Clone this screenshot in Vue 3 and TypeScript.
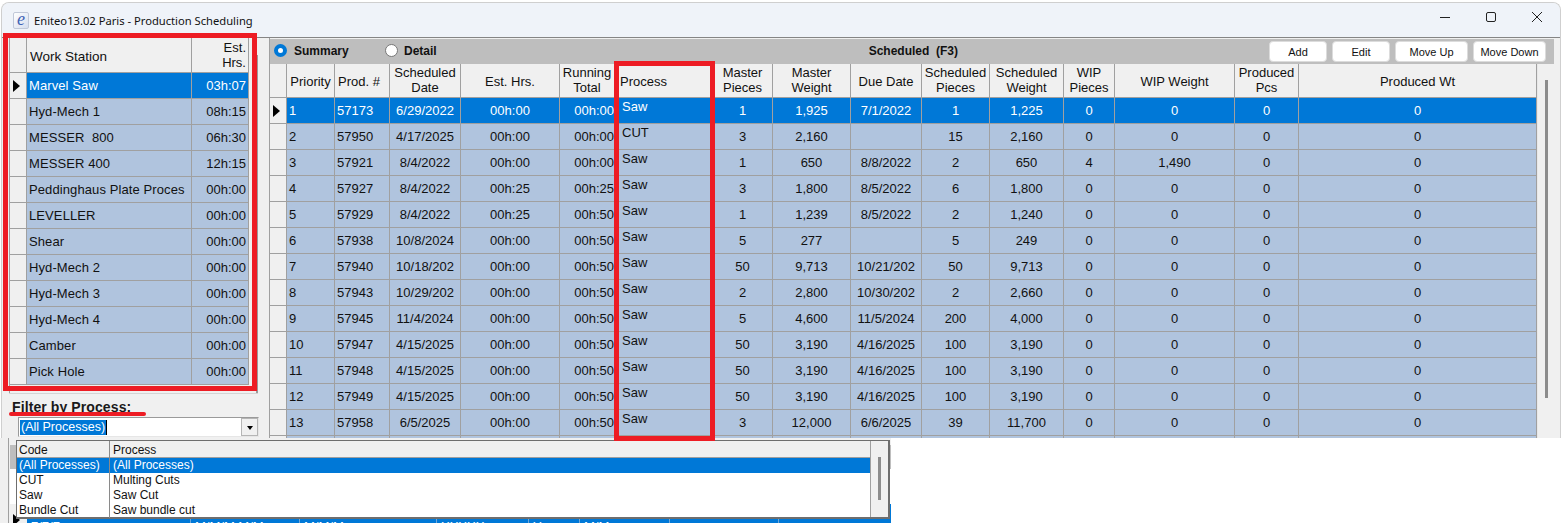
<script setup lang="ts">
interface Station {
  name: string
  hrs: string
}

interface Job {
  priority: number
  prod: string
  date: string
  est: string
  total: string
  process: string
  masterPcs: string
  masterWt: string
  due: string
  schedPcs: string
  schedWt: string
  wipPcs: string
  wipWt: string
}

const stations: Station[] = [
  { name: 'Marvel Saw', hrs: '03h:07' },
  { name: 'Hyd-Mech 1', hrs: '08h:15' },
  { name: 'MESSER  800', hrs: '06h:30' },
  { name: 'MESSER 400', hrs: '12h:15' },
  { name: 'Peddinghaus Plate Proces', hrs: '00h:00' },
  { name: 'LEVELLER', hrs: '00h:00' },
  { name: 'Shear', hrs: '00h:00' },
  { name: 'Hyd-Mech 2', hrs: '00h:00' },
  { name: 'Hyd-Mech 3', hrs: '00h:00' },
  { name: 'Hyd-Mech 4', hrs: '00h:00' },
  { name: 'Camber', hrs: '00h:00' },
  { name: 'Pick Hole', hrs: '00h:00' },
]

const job = (
  priority: number, prod: string, date: string, est: string, total: string, process: string,
  masterPcs: string, masterWt: string, due: string, schedPcs: string, schedWt: string,
  wipPcs = '0', wipWt = '0',
): Job => ({ priority, prod, date, est, total, process, masterPcs, masterWt, due, schedPcs, schedWt, wipPcs, wipWt })

const jobs: Job[] = [
  job(1, '57173', '6/29/2022', '00h:00', '00h:00', 'Saw', '1', '1,925', '7/1/2022', '1', '1,225'),
  job(2, '57950', '4/17/2025', '00h:00', '00h:00', 'CUT', '3', '2,160', '', '15', '2,160'),
  job(3, '57921', '8/4/2022', '00h:00', '00h:00', 'Saw', '1', '650', '8/8/2022', '2', '650', '4', '1,490'),
  job(4, '57927', '8/4/2022', '00h:25', '00h:25', 'Saw', '3', '1,800', '8/5/2022', '6', '1,800'),
  job(5, '57929', '8/4/2022', '00h:25', '00h:50', 'Saw', '1', '1,239', '8/5/2022', '2', '1,240'),
  job(6, '57938', '10/8/2024', '00h:00', '00h:50', 'Saw', '5', '277', '', '5', '249'),
  job(7, '57940', '10/18/202', '00h:00', '00h:50', 'Saw', '50', '9,713', '10/21/202', '50', '9,713'),
  job(8, '57943', '10/29/202', '00h:00', '00h:50', 'Saw', '2', '2,800', '10/30/202', '2', '2,660'),
  job(9, '57945', '11/4/2024', '00h:00', '00h:50', 'Saw', '5', '4,600', '11/5/2024', '200', '4,000'),
  job(10, '57947', '4/15/2025', '00h:00', '00h:50', 'Saw', '50', '3,190', '4/16/2025', '100', '3,190'),
  job(11, '57948', '4/15/2025', '00h:00', '00h:50', 'Saw', '50', '3,190', '4/16/2025', '100', '3,190'),
  job(12, '57949', '4/15/2025', '00h:00', '00h:50', 'Saw', '50', '3,190', '4/16/2025', '100', '3,190'),
  job(13, '57958', '6/5/2025', '00h:00', '00h:50', 'Saw', '3', '12,000', '6/6/2025', '39', '11,700'),
]

const actions = ['Add', 'Edit', 'Move Up', 'Move Down']
const scheduledTitle = 'Scheduled  (F3)'

const processes = [
  { code: '(All Processes)', name: '(All Processes)' },
  { code: 'CUT', name: 'Multing Cuts' },
  { code: 'Saw', name: 'Saw Cut' },
  { code: 'Bundle Cut', name: 'Saw bundle cut' },
]
</script>

<template>
  <div class="screen">
    <div class="window">
      <div class="titlebar">
        <div class="app-icon">e</div>
        <span class="title">Eniteo13.02 Paris - Production Scheduling</span>
        <div class="win-controls">
          <svg width="46" height="20" viewBox="0 0 46 20"><path d="M18 10.5h10" stroke="#222" fill="none" /></svg>
          <svg width="46" height="20" viewBox="0 0 46 20"><rect x="18.5" y="5.5" width="9" height="9" rx="1.5" stroke="#222" fill="none" /></svg>
          <svg width="46" height="20" viewBox="0 0 46 20"><path d="M18 5l10 10M28 5L18 15" stroke="#222" fill="none" /></svg>
        </div>
      </div>

      <div class="main">
        <div class="left-pane">
          <div class="stations-wrap">
            <div class="stations">
              <div class="st-row st-head">
                <div class="cell sel"></div>
                <div class="cell left">Work Station</div>
                <div class="cell two-line right">Est.<br />Hrs.</div>
              </div>
              <div v-for="(s, i) in stations" :key="s.name" class="st-row" :class="{ active: i === 0 }">
                <div class="cell sel"><i v-if="i === 0" class="marker"></i></div>
                <div class="cell left data name">{{ s.name }}</div>
                <div class="cell right data">{{ s.hrs }}</div>
              </div>
            </div>
            <div class="stations-scroll"><i></i></div>
          </div>
          <div class="filter-label">Filter by Process:</div>
          <div class="combo">
            <span class="combo-value">(All Processes)</span>
            <span class="combo-btn"><i></i></span>
          </div>
        </div>

        <div class="right-pane">
          <div class="toolbar">
            <span class="radio on"></span>
            <span class="radio-text summary">Summary</span>
            <span class="radio"></span>
            <span class="radio-text">Detail</span>
            <span class="toolbar-title">{{ scheduledTitle }}</span>
            <div class="actions">
              <button v-for="a in actions" :key="a" class="action" :class="{ wide: a.startsWith('Move') }">{{ a }}</button>
            </div>
          </div>

          <div class="jobs-area">
            <div class="jobs">
              <div class="job-row job-head">
                <div class="cell sel"></div>
                <div class="cell center">Priority</div>
                <div class="cell left tight">Prod. #</div>
                <div class="cell center two-line">Scheduled<br />Date</div>
                <div class="cell center">Est. Hrs.</div>
                <div class="cell center two-line">Running<br />Total</div>
                <div class="cell left tight small">Process</div>
                <div class="cell center two-line">Master<br />Pieces</div>
                <div class="cell center two-line">Master<br />Weight</div>
                <div class="cell center">Due Date</div>
                <div class="cell center two-line">Scheduled<br />Pieces</div>
                <div class="cell center two-line">Scheduled<br />Weight</div>
                <div class="cell center two-line">WIP<br />Pieces</div>
                <div class="cell center">WIP Weight</div>
                <div class="cell center two-line">Produced<br />Pcs</div>
                <div class="cell center">Produced Wt</div>
              </div>
              <div v-for="(j, i) in jobs" :key="j.prod" class="job-row" :class="{ active: i === 0 }">
                <div class="cell sel"><i v-if="i === 0" class="marker"></i></div>
                <div class="cell left tight data">{{ j.priority }}</div>
                <div class="cell left tight data">{{ j.prod }}</div>
                <div class="cell center data">{{ j.date }}</div>
                <div class="cell center data">{{ j.est }}</div>
                <div class="cell right data flush">{{ j.total }}</div>
                <div class="cell process data">{{ j.process }}</div>
                <div class="cell center data">{{ j.masterPcs }}</div>
                <div class="cell center data">{{ j.masterWt }}</div>
                <div class="cell center data">{{ j.due }}</div>
                <div class="cell center data">{{ j.schedPcs }}</div>
                <div class="cell center data">{{ j.schedWt }}</div>
                <div class="cell center data">{{ j.wipPcs }}</div>
                <div class="cell center data">{{ j.wipWt }}</div>
                <div class="cell center data">0</div>
                <div class="cell center data">0</div>
              </div>
              <div class="job-row">
                <div v-for="n in 16" :key="n" class="cell" :class="{ sel: n === 1 }"></div>
              </div>
            </div>
            <div class="jobs-scroll"><i></i></div>
          </div>
        </div>
      </div>
    </div>

    <!-- grid behind the dropdown, mostly hidden by it -->
    <div class="lower">
      <div class="lower-frame">
        <div class="lower-bar"></div>
        <div class="lower-body"></div>
        <div class="lower-row">
          <div class="lower-sel"><i class="marker"></i></div>
          <span>7/7/7</span>
          <span>M/M/M M/M</span>
          <span>M/M/M</span>
          <span>XXXXX</span>
          <span>Y</span>
          <span>M/M</span>
          <span></span>
        </div>
      </div>
    </div>

    <div class="popup">
      <div class="popup-list">
        <div class="popup-row popup-head">
          <span>Code</span>
          <span>Process</span>
        </div>
        <div v-for="(p, i) in processes" :key="p.code" class="popup-row" :class="{ active: i === 0 }">
          <span>{{ p.code }}</span>
          <span>{{ p.name }}</span>
        </div>
      </div>
      <div class="popup-scroll"><i></i></div>
    </div>

    <!-- annotations drawn over the screenshot -->
    <div class="mark mark-stations"></div>
    <div class="mark mark-process"></div>
    <div class="mark-line"></div>
  </div>
</template>

<style scoped>
.screen {
  position: relative;
  width: 1568px;
  height: 523px;
  overflow: hidden;
  background: #fff;
  font-family: "Liberation Sans", Arial, sans-serif;
  color: #111;
}

.window {
  width: 1560px;
  height: 436px;
  margin: 2px 0 0 1px;
  box-sizing: border-box;
  border: 1px solid #cfcfcf;
  border-bottom: 0;
  border-radius: 8px 8px 0 0;
  overflow: hidden;
  background: #f0f0f0;
}

.titlebar {
  display: flex;
  align-items: center;
  height: 34px;
  padding-left: 11px;
  background: #eff3f9;
}

.app-icon {
  width: 14px;
  height: 15px;
  margin-right: 5px;
  border: 1px solid #c0c8d8;
  border-radius: 2px;
  background: linear-gradient(135deg, #fff, #d5ddee);
  color: #3f63b5;
  font: italic 18px/13px "Liberation Serif", serif;
  text-align: center;
}

.title {
  font-family: "Noto Sans", sans-serif;
  font-size: 11.2px;
  color: #111;
}

.win-controls {
  display: flex;
  margin-left: auto;
  margin-bottom: 6px;
}

.main {
  display: flex;
  border-top: 1px solid #858585;
  height: 400px;
}

.left-pane {
  width: 256px;
  padding-left: 7px;
  box-sizing: border-box;
  flex: none;
}

.stations-wrap {
  display: flex;
  height: 356px;
  border-bottom: 1px solid #d4d4d4;
  box-sizing: border-box;
}

.stations {
  width: 240px;
  flex: none;
  box-sizing: border-box;
  border-left: 1px solid #a0a0a0;
}

.stations-scroll {
  flex: 1;
  display: flex;
  justify-content: flex-end;
  padding-top: 17px;
}

.stations-scroll i {
  width: 2px;
  background: #9a9a9a;
}

.cell {
  display: flex;
  align-items: center;
  overflow: hidden;
  box-sizing: border-box;
  border-right: 1px solid #a0a0a0;
  border-bottom: 1px solid #a0a0a0;
  font-size: 13px;
  white-space: pre;
  background: #b0c4de;
}

.cell.left { justify-content: flex-start; padding-left: 2px; }
.cell.right { justify-content: flex-end; padding-right: 2px; text-align: right; }
.cell.flush { padding-right: 0; }
.cell.center { justify-content: center; text-align: center; }
.cell.two-line { line-height: 15px; }
.cell.small { padding-left: 5px; }

.cell.process {
  align-items: flex-start;
  padding: 1px 0 0 7px;
}

.cell.sel {
  justify-content: flex-start;
  background: #f0f0f0;
}

.st-row {
  display: grid;
  grid-template-columns: 17px 165px 57px;
  height: 26px;
}

.st-head {
  height: 35px;
}

.st-head .cell,
.job-head .cell {
  background: #f0f0f0;
}

.st-head .left {
  padding: 2px 0 0 3px;
  font-size: 13.5px;
}

.job-head .cell {
  padding-top: 2px;
}

.job-head .two-line {
  padding-top: 0;
  padding-bottom: 2px;
}

.job-head .left {
  padding-left: 3px;
}

.job-head .small {
  padding-left: 5px;
}

.name {
  letter-spacing: 0.1px;
}

.active .cell:not(.sel) {
  background: #0078d7;
  color: #fff;
}

.marker {
  width: 0;
  height: 0;
  margin-left: 3px;
  border-left: 7px solid #000;
  border-top: 6px solid transparent;
  border-bottom: 6px solid transparent;
}

.filter-label {
  margin: 6px 0 0 3px;
  font-size: 14px;
  line-height: 15px;
  font-weight: 700;
  letter-spacing: 0.1px;
  color: #1a1a1a;
}

.combo {
  display: flex;
  align-items: center;
  width: 241px;
  height: 20px;
  margin: 2px 0 0 9px;
  box-sizing: border-box;
  border: 1px solid #9a9a9a;
  border-bottom-color: #e6e6e6;
  border-right-color: #e6e6e6;
  background: #fff;
  padding-left: 1px;
}

.combo-value {
  padding: 0 1px;
  background: #0078d7;
  color: #fff;
  font-size: 12.5px;
  line-height: 15px;
  border-right: 1px solid #000;
}

.combo-btn {
  display: flex;
  align-items: center;
  justify-content: center;
  width: 17px;
  height: 18px;
  margin-left: auto;
  box-sizing: border-box;
  border: 1px solid #b5b5b5;
  background: #f0f0f0;
}

.combo-btn i {
  margin-top: 2px;
  border-top: 4px solid #000;
  border-left: 3.5px solid transparent;
  border-right: 3.5px solid transparent;
}

.right-pane {
  width: 1285px;
  margin-left: 11px;
  padding-top: 1px;
  box-sizing: border-box;
  flex: none;
  border-left: 1px solid #a0a0a0;
}

.toolbar {
  display: flex;
  align-items: center;
  height: 25px;
  padding: 0 8px 2px 4px;
  box-sizing: border-box;
  background: #bebebe;
  font-size: 12px;
  font-weight: 700;
}

.radio {
  width: 13px;
  height: 13px;
  box-sizing: border-box;
  border: 1px solid #777;
  border-radius: 50%;
  background: #fff;
}

.radio.on {
  border: 4px solid #0078d7;
}

.radio-text {
  margin-left: 6px;
}

.radio-text.summary {
  width: 91px;
  margin-left: 7px;
}

.toolbar-title {
  margin-left: 432px;
  white-space: pre;
}

.actions {
  display: flex;
  gap: 5px;
  margin-left: auto;
  margin-top: 2px;
}

.action {
  width: 58px;
  height: 21px;
  padding: 0;
  border: 1px solid #dcdcdc;
  border-radius: 4px;
  background: #fff;
  color: #111;
  font-family: "Liberation Sans", Arial, sans-serif;
  font-size: 11px;
}

.action.wide {
  width: 73px;
}

.jobs-area {
  display: flex;
  height: 374px;
  overflow: hidden;
}

.jobs {
  width: 1267px;
  flex: none;
}

.job-row {
  display: grid;
  grid-template-columns: 17px 48px 55px 71px 99px 55px 98px 60px 78px 71px 68px 74px 51px 120px 64px 238px;
  height: 26px;
}

.job-head {
  height: 34px;
}

.jobs-scroll {
  flex: 1;
  display: flex;
  justify-content: center;
  padding: 16px 0 40px;
  border-left: 1px solid #e8e8e8;
}

.jobs-scroll i {
  width: 3px;
  background: #8c8c8c;
}

.lower {
  width: 891px;
  height: 85px;
  background: #f0f0f0;
}

.lower-frame {
  display: flex;
  flex-direction: column;
  height: 85px;
  margin-left: 8px;
  padding-top: 7px;
  box-sizing: border-box;
  border-left: 1px solid #a0a0a0;
}

.lower-bar {
  height: 24px;
  background: #bebebe;
  margin-left: 1px;
}

.lower-body {
  flex: 1;
  background: #fff;
  margin-left: 1px;
}

.lower-row {
  display: grid;
  grid-template-columns: 17px 164px 109px 137px 92px 51px 90px 109px 1fr;
  height: 19px;
  background: #0078d7;
  color: #fff;
  font-size: 13px;
  line-height: 46px;
  margin-left: 1px;
  overflow: hidden;
}

.lower-row span {
  padding-left: 4px;
  border-right: 1px solid #6fa6d8;
  overflow: hidden;
}

.lower-sel {
  display: flex;
  align-items: flex-end;
  background: #f0f0f0;
}

.lower-sel .marker {
  margin: 0 0 -3px 3px;
}

.popup {
  position: absolute;
  left: 16px;
  top: 440px;
  width: 874px;
  height: 79px;
  display: flex;
  box-sizing: border-box;
  border: 1px solid #6e6e6e;
  border-right-width: 2px;
  border-bottom-width: 2px;
  background: #fff;
  font-size: 12px;
}

.popup-list {
  flex: 1;
}

.popup-row {
  display: grid;
  grid-template-columns: 93px 1fr;
  height: 15px;
  line-height: 15px;
}

.popup-row span {
  padding-left: 2px;
  border-right: 1px solid #8a8a8a;
  white-space: nowrap;
}

.popup-row span:last-child {
  padding-left: 3px;
  border-right: 0;
}

.popup-head {
  height: 17px;
  line-height: 18px;
  box-sizing: border-box;
  background: #f0f0f0;
  border-bottom: 1px solid #a0a0a0;
}

.popup-row.active {
  background: #0078d7;
  color: #fff;
}

.popup-scroll {
  display: flex;
  justify-content: center;
  width: 18px;
  padding: 16px 0 17px;
  flex: none;
  box-sizing: border-box;
  background: #f0f0f0;
  border-left: 1px solid #a0a0a0;
}

.popup-scroll i {
  width: 3px;
  background: #8c8c8c;
}

.mark {
  position: absolute;
  box-sizing: border-box;
  border: 5px solid #ed1c24;
  pointer-events: none;
}

.mark-stations {
  left: 3px;
  top: 33px;
  width: 254px;
  height: 358px;
}

.mark-process {
  left: 614px;
  top: 61px;
  width: 101px;
  height: 380px;
}

.mark-line {
  position: absolute;
  left: 9px;
  top: 412px;
  width: 137px;
  height: 4px;
  border-radius: 2px;
  background: #ed1c24;
}
</style>

<style>
html,
body {
  margin: 0;
  background: #fff;
}
</style>
